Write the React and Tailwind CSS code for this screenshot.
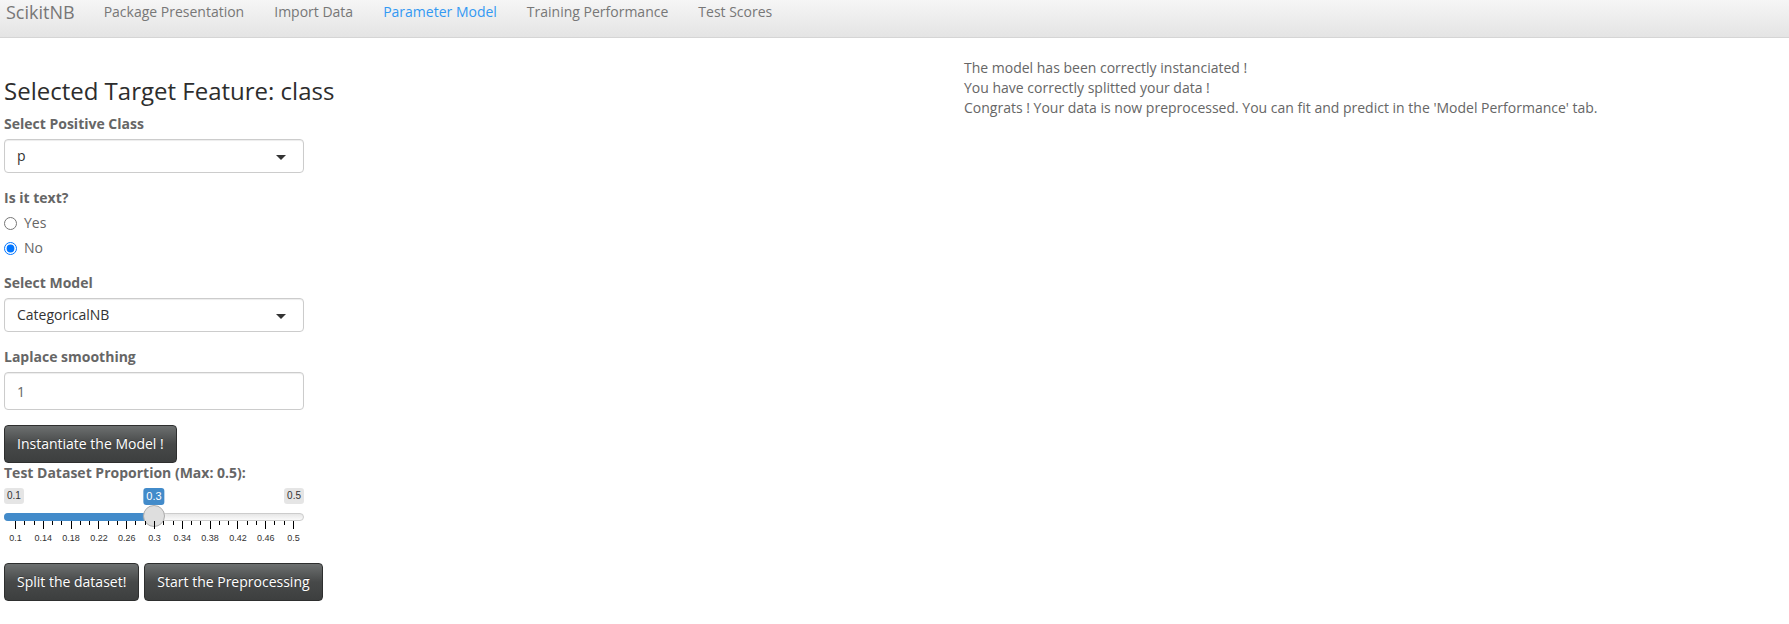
import React from 'react';

const navItems = ['Package Presentation', 'Import Data', 'Parameter Model', 'Training Performance', 'Test Scores'];

const messages = [
  'The model has been correctly instanciated !',
  'You have correctly splitted your data !',
  "Congrats ! Your data is now preprocessed. You can fit and predict in the 'Model Performance' tab.",
];

const SelectBox = ({ value }) => (
  <div className="relative flex h-[34px] w-[300px] items-center rounded-[4px] border border-[#cccccc] bg-white px-[12px] text-[#333] shadow-[inset_0_1px_1px_rgba(0,0,0,0.075)]">
    {value}
    <span className="absolute right-[17px] top-[15px] h-0 w-0 border-x-[5px] border-t-[5px] border-x-transparent border-t-[#333]"></span>
  </div>
);

const DarkButton = ({ children }) => (
  <button className="flex h-[38px] items-center rounded-[4px] border border-[#2e2f2f] bg-gradient-to-b from-[#6d7070] via-[#474949] to-[#3d3f3f] px-[12px] text-[14px] text-white [text-shadow:0_-1px_0_rgba(0,0,0,0.3)]">
    {children}
  </button>
);

const Slider = () => {
  const min = 0.1;
  const max = 0.5;
  const value = 0.3;
  const span = 278;
  const handleX = 11 + ((value - min) / (max - min)) * span;
  const majors = Array.from({ length: 11 }, (_, i) => i);
  const minors = [];
  for (let i = 0; i < 10; i++) {
    minors.push(11 + i * 27.8 + 9.27);
    minors.push(11 + i * 27.8 + 18.53);
  }
  const fmt = (v) => String(Math.round(v * 100) / 100);

  return (
    <div className="relative mb-[15px] h-[60px] w-[300px] font-['Liberation_Sans',Arial,sans-serif]">
      <span className="absolute left-0 top-0 rounded-[3px] bg-black/10 px-[3px] py-[1px] text-[10px] leading-[1.333] text-[#333]">0.1</span>
      <span className="absolute right-0 top-0 rounded-[3px] bg-black/10 px-[3px] py-[1px] text-[10px] leading-[1.333] text-[#333]">0.5</span>
      <span
        className="absolute top-0 -translate-x-1/2 rounded-[3px] bg-[#428bca] px-[3px] py-[1px] text-[11px] leading-[1.333] text-white"
        style={{ left: handleX }}
      >
        0.3
      </span>
      <div className="absolute left-0 right-0 top-[25px] h-[8px] rounded-[8px] border border-[#cccccc] bg-gradient-to-b from-[#e6e6e6] to-[#fafafa]"></div>
      <div className="absolute left-0 top-[25px] h-[8px] rounded-l-[8px] bg-[#428bca]" style={{ width: handleX }}></div>
      <div
        className="absolute top-[17px] h-[22px] w-[22px] -translate-x-1/2 rounded-full border border-[#ababab] bg-[#dedede] shadow-[1px_1px_3px_rgba(255,255,255,0.3)]"
        style={{ left: handleX }}
      ></div>
      <div className="absolute bottom-0 left-0 h-[27px] w-full">
        {majors.map((i) => (
          <span key={'p' + i} className="absolute top-0 h-[8px] w-px bg-black" style={{ left: 11 + i * 27.8 }}></span>
        ))}
        {minors.map((x, i) => (
          <span key={'m' + i} className="absolute top-0 h-[4px] w-px bg-black" style={{ left: x }}></span>
        ))}
        {majors.map((i) => (
          <span
            key={'t' + i}
            className="absolute bottom-[5px] -translate-x-1/2 whitespace-nowrap text-[9px] leading-[9px] text-[#333]"
            style={{ left: 11.5 + i * 27.8 }}
          >
            {fmt(min + i * 0.04)}
          </span>
        ))}
      </div>
    </div>
  );
};

const App = () => {
  return (
    <div className="min-h-screen bg-white font-['Open_Sans',sans-serif] text-[14px] leading-[20px] text-[#666]">
      <nav className="flex h-[38px] items-start border-b border-[#d5d5d5] bg-gradient-to-b from-[#f6f6f6] to-[#e4e4e4] pt-[2px]">
        <span className="pl-[6px] pr-[14px] text-[18px] leading-[20px] text-[#777]">ScikitNB</span>
        {navItems.map((item) => (
          <span key={item} className={`px-[15px] ${item === 'Parameter Model' ? 'text-[#3399f3]' : 'text-[#777]'}`}>
            {item}
          </span>
        ))}
      </nav>

      <div className="mt-[20px] flex">
        <div className="w-[964px] shrink-0 pl-[4px]">
          <h3 className="mb-[10px] mt-[20px] text-[24px] font-normal leading-[1.1] text-[#2d2d2d]">Selected Target Feature: class</h3>

          <div className="mb-[15px]">
            <label className="mb-[5px] block font-bold">Select Positive Class</label>
            <SelectBox value="p" />
          </div>

          <div className="mb-[15px]">
            <label className="mb-[5px] block font-bold">Is it text?</label>
            <div className="flex flex-col gap-[5px]">
              <label className="flex items-center gap-[7px]">
                <input type="radio" name="text" className="m-0 h-[13px] w-[13px]" readOnly />
                Yes
              </label>
              <label className="flex items-center gap-[7px]">
                <input type="radio" name="text" className="m-0 h-[13px] w-[13px]" defaultChecked />
                No
              </label>
            </div>
          </div>

          <div className="mb-[15px]">
            <label className="mb-[5px] block font-bold">Select Model</label>
            <SelectBox value="CategoricalNB" />
          </div>

          <div className="mb-[15px]">
            <label className="mb-[5px] block font-bold">Laplace smoothing</label>
            <input
              type="text"
              defaultValue="1"
              className="block h-[38px] w-[300px] rounded-[4px] border border-[#cccccc] px-[12px] text-[#666] shadow-[inset_0_1px_1px_rgba(0,0,0,0.075)] outline-none"
            />
          </div>

          <DarkButton>Instantiate the Model !</DarkButton>

          <label className="mb-[5px] block font-bold">Test Dataset Proportion (Max: 0.5):</label>
          <Slider />

          <div className="flex gap-[5px]">
            <DarkButton>Split the dataset!</DarkButton>
            <DarkButton>Start the Preprocessing</DarkButton>
          </div>
        </div>

        <div className="flex flex-col">
          {messages.map((m) => (
            <div key={m}>{m}</div>
          ))}
        </div>
      </div>
    </div>
  );
};

export default App;
